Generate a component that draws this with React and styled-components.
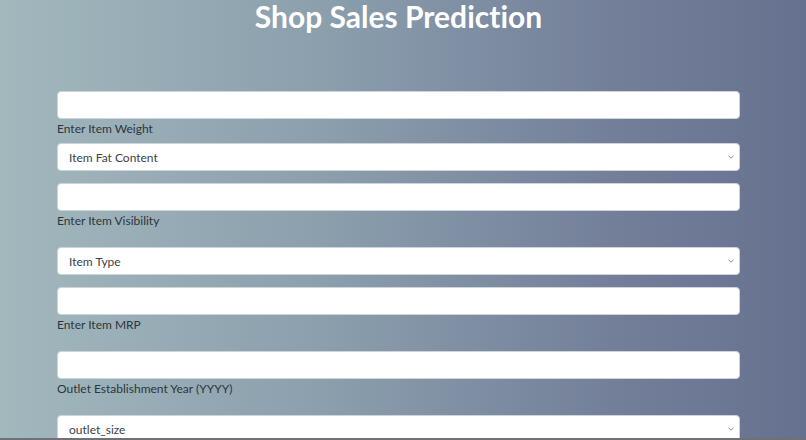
import React from "react";
import styled, { createGlobalStyle } from "styled-components";

const GlobalStyle = createGlobalStyle`
   html, body {
      margin: 0;
      padding: 0;
   }
   body {
      font-family: "Lato", "Open Sans", sans-serif;
   }
`;

const Page = styled.div`
   height: 438px;
   overflow: hidden;
   border-bottom: 2px solid #6f7177;
   background: linear-gradient(90deg, #a2b8bd 0%, #8b9fad 40%, #74809a 75%, #66718f 100%);
`;

const Title = styled.h1`
   margin: 0;
   padding-right: 9px;
   text-align: center;
   color: #ffffff;
   font-family: "Lato", "Open Sans", sans-serif;
   font-variant-ligatures: none;
   font-weight: 700;
   font-size: 30px;
   line-height: 32px;
`;

const Form = styled.form`
   display: flex;
   flex-direction: column;
   width: 683px;
   margin: 59px 0 0 57px;
`;

const Field = styled.div`
   display: flex;
   flex-direction: column;
   margin-bottom: ${(p) => p.$gap}px;
`;

const TextInput = styled.input`
   box-sizing: border-box;
   height: 28px;
   width: 100%;
   border: 1px solid #ced4da;
   border-radius: 4px;
   background: #ffffff;
   outline: none;
`;

const Label = styled.label`
   font-size: 12px;
   line-height: 20px;
   color: #2e363d;
`;

const SelectBox = styled.div`
   box-sizing: border-box;
   height: 28px;
   display: flex;
   align-items: center;
   justify-content: space-between;
   padding: 0 5px 0 11px;
   border: 1px solid #ced4da;
   border-radius: 4px;
   background: #ffffff;
   font-size: 12px;
   color: #3d4248;
`;

const Chevron = () => (
   <svg width="6" height="4" viewBox="0 0 6 4">
      <path d="M0.5 0.8 L3 3.2 L5.5 0.8" fill="none" stroke="#8a8f96" strokeWidth="1" />
   </svg>
);

const fields = [
   { type: "input", label: "Enter Item Weight", gap: 4 },
   { type: "select", text: "Item Fat Content", gap: 12 },
   { type: "input", label: "Enter Item Visibility", gap: 16 },
   { type: "select", text: "Item Type", gap: 12 },
   { type: "input", label: "Enter Item MRP", gap: 16 },
   { type: "input", label: "Outlet Establishment Year (YYYY)", gap: 16 },
   { type: "select", text: "outlet_size", gap: 12 },
];

export default function App() {
   return (
      <>
         <GlobalStyle />
         <Page>
            <Title>Shop Sales Prediction</Title>
            <Form>
               {fields.map((f, i) =>
                  f.type === "input" ? (
                     <Field key={i} $gap={f.gap}>
                        <TextInput type="text" />
                        <Label>{f.label}</Label>
                     </Field>
                  ) : (
                     <Field key={i} $gap={f.gap}>
                        <SelectBox>
                           <span>{f.text}</span>
                           <Chevron />
                        </SelectBox>
                     </Field>
                  )
               )}
            </Form>
         </Page>
      </>
   );
}
